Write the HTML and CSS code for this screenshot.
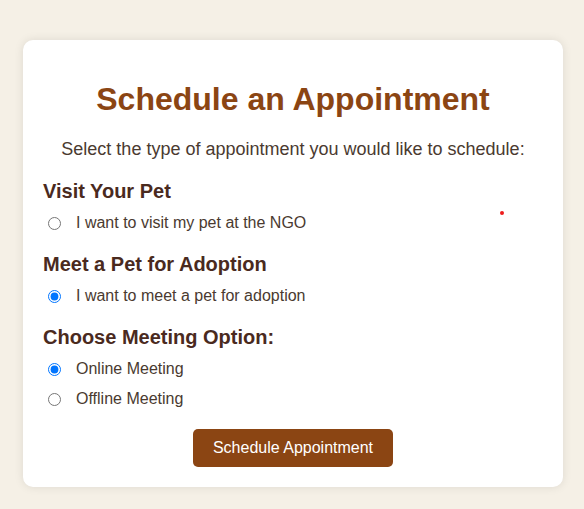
FILE: index.html
```html
<!DOCTYPE html>
<html lang="en">
<head>
<meta charset="utf-8">
<title>Schedule an Appointment</title>
<link rel="stylesheet" href="styles.css">
</head>
<body>
<div class="card">
  <span class="dot"></span>
  <h1 class="title">Schedule an Appointment</h1>
  <p class="intro">Select the type of appointment you would like to schedule:</p>
  <h3 class="section">Visit Your Pet</h3>
  <label class="option"><input type="radio" name="type" class="radio">I want to visit my pet at the NGO</label>
  <h3 class="section">Meet a Pet for Adoption</h3>
  <label class="option"><input type="radio" name="type" class="radio" checked>I want to meet a pet for adoption</label>
  <h3 class="section">Choose Meeting Option:</h3>
  <label class="option"><input type="radio" name="mode" class="radio" checked>Online Meeting</label>
  <label class="option"><input type="radio" name="mode" class="radio">Offline Meeting</label>
  <div class="actions"><button class="btn" type="button">Schedule Appointment</button></div>
</div>
</body>
</html>
```
FILE: styles.css
```css
html, body {
  margin: 0;
  padding: 0;
}
body {
  background: #f5f0e6;
  font-family: "Liberation Sans", Arial, sans-serif;
  color: #4a3a30;
  padding-top: 40px;
  padding-bottom: 20px;
}
.card {
  position: relative;
  width: 500px;
  margin: 0 auto;
  padding: 20px;
  background: #ffffff;
  border-radius: 10px;
  box-shadow: 0 0 10px rgba(0, 0, 0, 0.1);
  transform: translateX(1px);
}
.dot {
  position: absolute;
  left: 477px;
  top: 171px;
  width: 4px;
  height: 4px;
  border-radius: 50%;
  background: #ee1c1c;
}
.title {
  font-size: 32px;
  font-weight: bold;
  color: #8b4513;
  text-align: center;
  margin: 21px 0;
}
.intro {
  font-size: 18px;
  text-align: center;
  margin: 18px 0;
}
.section {
  font-size: 20px;
  font-weight: bold;
  color: #4a2a1e;
  margin: 20px 0 0;
}
.option {
  display: flex;
  align-items: center;
  height: 20px;
  margin: 10px 0;
  font-size: 16px;
}
.radio {
  width: 13px;
  height: 13px;
  margin: 0 15px 0 5px;
}
.actions {
  display: flex;
  justify-content: center;
  margin-top: 20px;
}
.btn {
  background: #8b4513;
  color: #ffffff;
  border: none;
  border-radius: 5px;
  padding: 10px 20px;
  font-family: "Liberation Sans", Arial, sans-serif;
  font-size: 16px;
  line-height: 18px;
  white-space: nowrap;
}
```
